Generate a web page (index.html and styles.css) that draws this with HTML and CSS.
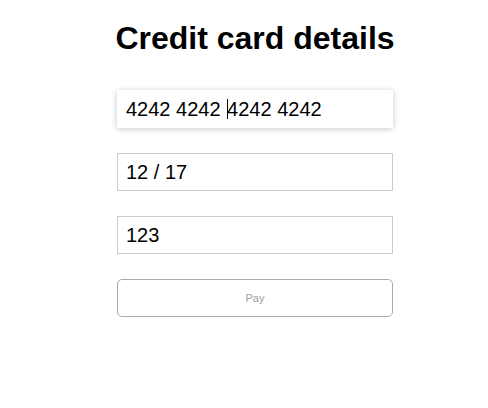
FILE: index.html
```html
<!DOCTYPE html>
<html>
<head>
<meta charset="utf-8">
<link rel="stylesheet" href="styles.css">
</head>
<body>
<div class="page">
  <h1 class="title">Credit card details</h1>
  <form class="form">
    <div class="field field--focus">4242 4242 <span class="caret"></span>4242 4242</div>
    <div class="field">12 / 17</div>
    <div class="field">123</div>
    <button type="button" class="pay">Pay</button>
  </form>
</div>
</body>
</html>
```
FILE: styles.css
```css
html, body {
  margin: 0;
  padding: 0;
  background: #fff;
}
body {
  padding-left: 22px;
  font-family: "Liberation Sans", Arial, Helvetica, sans-serif;
  color: #000;
}
.page {
  width: 276px;
  margin: 0 auto;
  padding-top: 20px;
}
.title {
  margin: 0 -12px 34px;
  font-size: 32px;
  line-height: 36px;
  font-weight: bold;
  text-align: center;
  white-space: nowrap;
}
.form {
  display: flex;
  flex-direction: column;
  gap: 25px;
}
.field {
  box-sizing: border-box;
  height: 38px;
  border: 1px solid #cccccc;
  padding: 0 8px;
  display: flex;
  align-items: center;
  font-size: 20px;
  line-height: 24px;
  white-space: pre;
}
.field--focus {
  border-color: transparent;
  box-shadow: 0 1px 6px rgba(0, 0, 0, 0.22);
}
.caret {
  display: inline-block;
  width: 1px;
  height: 20px;
  margin-left: 1px;
  margin-right: -1px;
  background: #000;
  vertical-align: middle;
}
.pay {
  box-sizing: border-box;
  height: 38px;
  width: 100%;
  border: 1px solid #aaaaaa;
  border-radius: 5px;
  background: #fff;
  color: #a0a0a0;
  font-family: "Liberation Sans", Arial, Helvetica, sans-serif;
  font-size: 11px;
  padding: 0;
}
```
